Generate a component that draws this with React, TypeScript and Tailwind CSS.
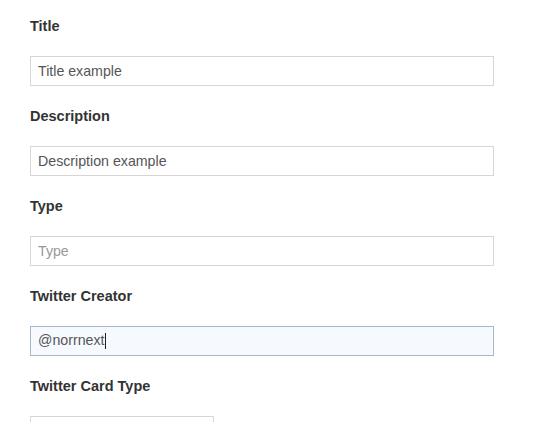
const fields = [
  { label: "Title", value: "Title example" },
  { label: "Description", value: "Description example" },
  { label: "Type", placeholder: "Type" },
];

const labelClass =
  "block h-5 text-[14.5px] font-bold leading-5 text-[#333333]";
const inputClass =
  "block h-[30px] w-[464px] border border-[#d6d6d6] bg-white px-[7px] text-[14.2px] text-[#555555] outline-none placeholder:text-[#999999]";

export default function App() {
  return (
    <div
      className="h-[422px] overflow-hidden bg-white pl-[30px] pt-4"
      style={{ fontFamily: '"Liberation Sans", Arial, sans-serif' }}
    >
      {fields.map((field) => (
        <div key={field.label} className="mb-5">
          <label className={labelClass}>{field.label}</label>
          <input
            type="text"
            readOnly
            defaultValue={field.value}
            placeholder={field.placeholder}
            className={`mt-5 ${inputClass}`}
          />
        </div>
      ))}

      <div className="mb-5">
        <label className={labelClass}>Twitter Creator</label>
        <div className="mt-5 flex h-[30px] w-[464px] items-center border border-[#a9b9c8] bg-[#f6faff] px-[7px] text-[14.2px] text-[#555555]">
          <span>@norrnext</span>
          <span className="ml-px h-[16px] w-px bg-[#222222]" />
        </div>
      </div>

      <div>
        <label className={labelClass}>Twitter Card Type</label>
        <div className="mt-5 h-[30px] w-[184px] border border-[#d6d6d6] bg-white" />
      </div>
    </div>
  );
}
